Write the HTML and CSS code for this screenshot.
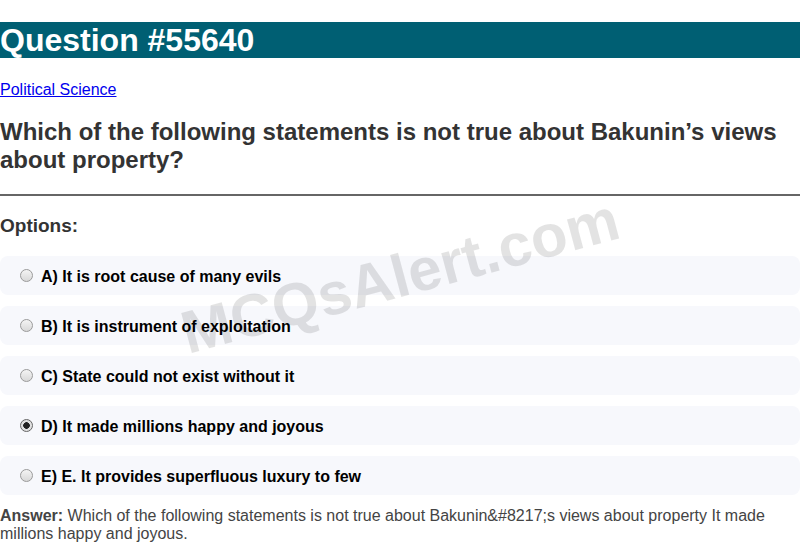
FILE: index.html
```html
<!DOCTYPE html>
<html>
<head>
<meta charset="utf-8">
<link rel="stylesheet" href="styles.css">
</head>
<body>
<div class="page">
  <h1 class="title">Question #55640</h1>
  <a class="cat" href="#">Political Science</a>
  <h2 class="question">Which of the following statements is not true about Bakunin’s views about property?</h2>
  <hr class="rule">
  <h3 class="opt-head">Options:</h3>
  <div class="options">
    <label class="option"><span class="radio"></span><span class="otext">A) It is root cause of many evils</span></label>
    <label class="option"><span class="radio"></span><span class="otext">B) It is instrument of exploitation</span></label>
    <label class="option"><span class="radio"></span><span class="otext">C) State could not exist without it</span></label>
    <label class="option"><span class="radio checked"></span><span class="otext">D) It made millions happy and joyous</span></label>
    <label class="option"><span class="radio"></span><span class="otext">E) E. It provides superfluous luxury to few</span></label>
  </div>
  <p class="answer"><b>Answer:</b> Which of the following statements is not true about Bakunin&amp;#8217;s views about property It made millions happy and joyous.</p>
  <div class="watermark">MCQsAlert.com</div>
</div>
</body>
</html>
```

FILE: styles.css
```css
html, body {
  margin: 0;
  padding: 0;
  background: #fff;
}
body {
  font-family: "Liberation Sans", Arial, sans-serif;
  color: #333;
}
.page {
  position: relative;
  padding-top: 22px;
  overflow: hidden;
  height: 520px;
}
.title {
  margin: 0;
  background: #005f73;
  color: #fff;
  font-size: 32px;
  line-height: 36px;
  font-weight: bold;
  padding: 0;
  height: 36px;
}
.cat {
  display: inline-block;
  margin-top: 23px;
  font-size: 16px;
  line-height: 18px;
  color: #0000ee;
  text-decoration: underline;
}
.question {
  margin: 19px 0 0 0;
  font-size: 24px;
  line-height: 28px;
  font-weight: bold;
  color: #333;
}
.rule {
  margin: 20px 0 0 0;
  border: 0;
  border-top: 2px solid #666;
  height: 0;
}
.opt-head {
  margin: 19px 0 0 0;
  font-size: 19px;
  line-height: 22px;
  font-weight: bold;
  color: #333;
}
.options {
  display: flex;
  flex-direction: column;
  gap: 11px;
  margin-top: 19px;
}
.option {
  display: flex;
  align-items: center;
  height: 39px;
  background: #f7f8fc;
  border-radius: 8px;
  padding-left: 20px;
  gap: 8px;
}
.radio {
  width: 11px;
  height: 11px;
  border: 1px solid #9a9a9a;
  border-radius: 50%;
  background: linear-gradient(#f4f4f4, #d8d8d8);
  position: relative;
  top: 0;
  box-sizing: content-box;
}
.radio.checked {
  background: radial-gradient(circle, #222 0 3px, #e0e0e0 3.6px);
  border-color: #666;
}
.otext {
  position: relative;
  top: 1px;
  font-size: 16px;
  font-weight: bold;
  color: #000;
}
.answer {
  margin: 12px 0 0 0;
  font-size: 16px;
  line-height: 18px;
  color: #444;
}
.answer b {
  color: #444;
}
.watermark {
  position: absolute;
  left: 400px;
  top: 276px;
  transform: translate(-50%, -50%) rotate(-15deg);
  font-size: 60px;
  font-weight: bold;
  color: rgba(0, 0, 0, 0.11);
  white-space: nowrap;
  pointer-events: none;
}
```
